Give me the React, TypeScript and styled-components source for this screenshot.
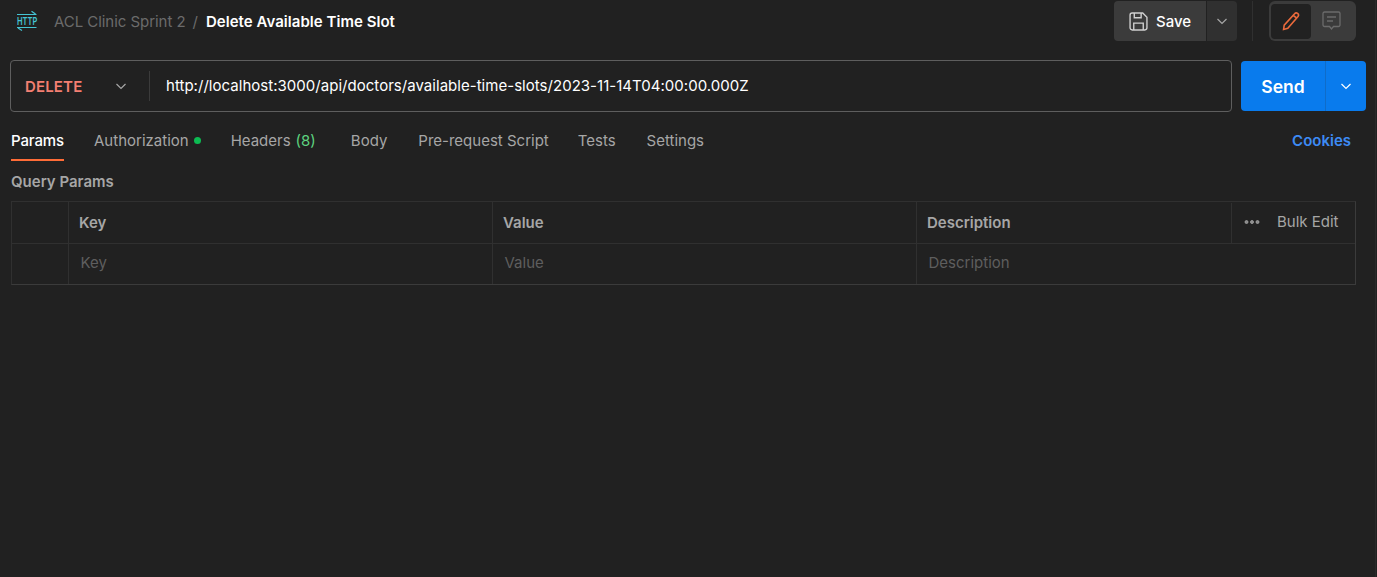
import React, { FC } from 'react';
import styled, { createGlobalStyle } from 'styled-components';

const GlobalStyle = createGlobalStyle`
    html, body {
        margin: 0;
        padding: 0;
        background: #212121;
        font-family: Inter, "Liberation Sans", sans-serif;
        overflow: hidden;
    }
    * { box-sizing: border-box; }
`;

const Page = styled.div`
    width: 1377px;
    height: 577px;
    background: #212121;
    box-shadow: inset -1px 0 0 #212121, inset -2px 0 0 #2a2a2a;
    color: #fff;
    overflow: hidden;
`;

const TopBar = styled.div`
    display: flex;
    align-items: flex-start;
    height: 60px;
    padding: 1px 21px 0 16px;
`;

const Crumbs = styled.div`
    display: flex;
    align-items: center;
    height: 40px;
    flex: 1;
    font-size: 15px;
`;

const Collection = styled.span`
    color: #6b6b6b;
    margin-left: 16px;
    letter-spacing: -0.05px;
`;

const Slash = styled.span`
    color: #6b6b6b;
    margin: 0 8px 0 7px;
`;

const RequestName = styled.span`
    color: #fff;
    font-weight: 600;
    letter-spacing: 0.04px;
`;

const SaveGroup = styled.div`
    display: flex;
    height: 40px;
    gap: 1px;
`;

const SaveButton = styled.div`
    display: flex;
    align-items: center;
    gap: 8px;
    width: 92px;
    padding-left: 15px;
    background: #3b3b3b;
    border-radius: 4px 0 0 4px;
    color: #fff;
    font-size: 15px;
    font-weight: 500;
`;

const SaveCaret = styled.div`
    display: flex;
    align-items: center;
    justify-content: center;
    width: 30px;
    background: #303030;
    border-radius: 0 4px 4px 0;
    color: #a6a6a6;
`;

const Divider = styled.div`
    width: 1px;
    height: 40px;
    margin: 0 16px 0 15px;
    background: #303030;
`;

const ModeToggle = styled.div`
    display: flex;
    align-items: center;
    width: 87px;
    height: 40px;
    padding: 3px 2px;
    background: #3b3b3b;
    border-radius: 6px;
`;

const ModeButton = styled.div<{ $active?: boolean }>`
    display: flex;
    align-items: center;
    justify-content: center;
    width: 40px;
    height: 35px;
    border-radius: 4px;
    background: ${p => (p.$active ? '#212121' : 'transparent')};
`;

const UrlRow = styled.div`
    display: flex;
    align-items: center;
    height: 52px;
    padding: 0 11px 0 10px;
    gap: 9px;
`;

const UrlBox = styled.div`
    display: flex;
    align-items: center;
    flex: 1;
    height: 52px;
    border: 1px solid #5e5e5e;
    border-radius: 4px;
`;

const Method = styled.div`
    display: flex;
    align-items: center;
    justify-content: space-between;
    width: 139px;
    height: 30px;
    padding: 0 14px;
    border-right: 1px solid #3b3b3b;
    color: #f47f72;
    font-size: 15px;
    font-weight: 600;
    letter-spacing: 0.15px;
`;

const MethodCaret = styled.span`
    display: flex;
    color: #a6a6a6;
    margin-right: 6px;
`;

const UrlText = styled.div`
    margin-left: 16px;
    margin-bottom: 1px;
    color: #fff;
    font-size: 15px;
    letter-spacing: 0.03px;
`;

const SendGroup = styled.div`
    display: flex;
    width: 125px;
    height: 50px;
    background: #097bed;
    border-radius: 4px;
`;

const SendLabel = styled.div`
    display: flex;
    align-items: center;
    justify-content: center;
    width: 85px;
    border-right: 1px solid #0f6cc9;
    color: #fff;
    font-size: 17.5px;
    font-weight: 600;
`;

const SendCaret = styled.div`
    display: flex;
    align-items: center;
    justify-content: center;
    flex: 1;
    color: #fff;
`;

const TabBar = styled.div`
    display: flex;
    align-items: flex-start;
    height: 49px;
    padding: 0 26px 0 11px;
`;

const Tab = styled.div<{ $active?: boolean; $gap: number }>`
    display: flex;
    align-items: center;
    height: 49px;
    padding-top: 10px;
    margin-right: ${p => p.$gap}px;
    border-bottom: 2px solid ${p => (p.$active ? '#ff6c37' : 'transparent')};
    color: ${p => (p.$active ? '#fff' : '#a6a6a6')};
    font-size: 15px;
    font-weight: ${p => (p.$active ? 500 : 400)};
    letter-spacing: ${p => (p.$active ? '-0.12px' : '0')};
`;

const StatusDot = styled.span`
    width: 7px;
    height: 7px;
    margin-left: 5px;
    border-radius: 50%;
    background: #0cbb52;
`;

const Count = styled.span`
    margin-left: 5px;
    color: #5dd17f;
`;

const Cookies = styled.div`
    display: flex;
    align-items: center;
    height: 49px;
    padding-top: 10px;
    padding-bottom: 2px;
    margin-left: auto;
    color: #3d8bf5;
    font-size: 15px;
    font-weight: 600;
`;

const SectionTitle = styled.div`
    height: 29px;
    padding: 12px 0 0 11px;
    color: #a6a6a6;
    font-size: 15px;
    font-weight: 600;
    line-height: 17px;
`;

const Table = styled.div`
    width: 1345px;
    margin: 11px 0 0 11px;
    border: 1px solid #303030;
    border-right-color: #3b3b3b;
    border-bottom-color: #3b3b3b;
`;

const Row = styled.div<{ $head?: boolean }>`
    display: grid;
    grid-template-columns: 56px 424px 424px 1fr;
    height: ${p => (p.$head ? 42 : 40)}px;
    border-bottom: ${p => (p.$head ? '1px solid #303030' : 'none')};
`;

const Cell = styled.div<{ $head?: boolean }>`
    display: flex;
    align-items: center;
    padding-left: ${p => (p.$head ? 10 : 11.5)}px;
    padding-bottom: ${p => (p.$head ? 0 : 4)}px;
    border-left: 1px solid #303030;
    color: ${p => (p.$head ? '#a6a6a6' : '#5e5e5e')};
    font-size: 15px;
    font-weight: ${p => (p.$head ? 600 : 400)};
    &:first-child { border-left: none; }
`;

const DescriptionHead = styled.div`
    display: flex;
    align-items: center;
    justify-content: space-between;
    padding-left: 10px;
    border-left: 1px solid #303030;
    color: #a6a6a6;
    font-size: 15px;
    font-weight: 600;
`;

const BulkEdit = styled.div`
    display: flex;
    align-items: center;
    width: 124px;
    height: 40px;
    padding: 0 0 2px 12px;
    border-left: 1px solid #303030;
    color: #a6a6a6;
    font-size: 15px;
    font-weight: 400;
`;

const BulkLabel = styled.span`
    margin-left: 17px;
`;

const HttpIcon: FC = () => (
    <svg width="22" height="22" viewBox="0 0 22 22" fill="none" stroke="#45c4d4" strokeWidth="1.2">
        <path d="M1 4.5H20.5M15.5 1.2L19.5 4" />
        <path d="M1 17.5H20.5M2 18L6 20.6" />
        <text transform="translate(1 15) scale(0.68 1)" fontSize="11" fontWeight="600" fill="#45c4d4" stroke="none" fontFamily="Inter, sans-serif">HTTP</text>
    </svg>
);

const Chevron: FC<{ size?: number }> = ({ size = 16 }) => (
    <svg width={size} height={size} viewBox="0 0 16 16" fill="none" stroke="currentColor" strokeWidth="1.2">
        <path d="M3.5 6L8 10.5L12.5 6" />
    </svg>
);

const SaveIcon: FC = () => (
    <svg width="19" height="19" viewBox="0 0 18 18" fill="none" stroke="#d0d0d0" strokeWidth="1.3">
        <path d="M1 3A2 2 0 0 1 3 1H13L17 5V15A2 2 0 0 1 15 17H3A2 2 0 0 1 1 15Z" />
        <path d="M5 1V5.5H11.5V1" />
        <path d="M4.5 17V10.5H13.5V17" />
    </svg>
);

const PencilIcon: FC = () => (
    <svg width="20" height="20" viewBox="0 0 20 20" fill="none" stroke="#ea6a3c" strokeWidth="1.6">
        <path d="M13.6 2.8A2.1 2.1 0 0 1 17 5.4L6.8 17.2L2.6 18.4L3.2 14.2Z" />
        <path d="M12.2 4.4L15.6 7" />
    </svg>
);

const CommentIcon: FC = () => (
    <svg width="19" height="20" viewBox="0 0 19 20" fill="none" stroke="#6b6b6b" strokeWidth="1.3">
        <path d="M1 2.5A1.5 1.5 0 0 1 2.5 1H16.5A1.5 1.5 0 0 1 18 2.5V14A1.5 1.5 0 0 1 16.5 15.5H11.5L9.5 18L7.5 15.5H2.5A1.5 1.5 0 0 1 1 14Z" />
        <path d="M5 6H14M5 10H11" />
    </svg>
);

const DotsIcon: FC = () => (
    <svg width="16" height="6" viewBox="0 0 16 6" fill="#8a8a8a" stroke="#a6a6a6" strokeWidth="0.8">
        <circle cx="2.5" cy="3" r="1.5" />
        <circle cx="8" cy="3" r="1.5" />
        <circle cx="13.5" cy="3" r="1.5" />
    </svg>
);

const App: FC = () => (
    <Page>
        <GlobalStyle />
        <TopBar>
            <Crumbs>
                <HttpIcon />
                <Collection>ACL Clinic Sprint 2</Collection>
                <Slash>/</Slash>
                <RequestName>Delete Available Time Slot</RequestName>
            </Crumbs>
            <SaveGroup>
                <SaveButton><SaveIcon />Save</SaveButton>
                <SaveCaret><Chevron /></SaveCaret>
            </SaveGroup>
            <Divider />
            <ModeToggle>
                <ModeButton $active><PencilIcon /></ModeButton>
                <ModeButton><CommentIcon /></ModeButton>
            </ModeToggle>
        </TopBar>

        <UrlRow>
            <UrlBox>
                <Method>
                    DELETE
                    <MethodCaret><Chevron /></MethodCaret>
                </Method>
                <UrlText>http://localhost:3000/api/doctors/available-time-slots/2023-11-14T04:00:00.000Z</UrlText>
            </UrlBox>
            <SendGroup>
                <SendLabel>Send</SendLabel>
                <SendCaret><Chevron /></SendCaret>
            </SendGroup>
        </UrlRow>

        <TabBar>
            <Tab $active $gap={30}>Params</Tab>
            <Tab $gap={30}>Authorization<StatusDot /></Tab>
            <Tab $gap={35}>Headers<Count>(8)</Count></Tab>
            <Tab $gap={31}>Body</Tab>
            <Tab $gap={29}>Pre-request Script</Tab>
            <Tab $gap={31}>Tests</Tab>
            <Tab $gap={30}>Settings</Tab>
            <Cookies>Cookies</Cookies>
        </TabBar>

        <SectionTitle>Query Params</SectionTitle>

        <Table>
            <Row $head>
                <Cell $head />
                <Cell $head>Key</Cell>
                <Cell $head>Value</Cell>
                <DescriptionHead>
                    Description
                    <BulkEdit><DotsIcon /><BulkLabel>Bulk Edit</BulkLabel></BulkEdit>
                </DescriptionHead>
            </Row>
            <Row>
                <Cell />
                <Cell>Key</Cell>
                <Cell>Value</Cell>
                <Cell>Description</Cell>
            </Row>
        </Table>
    </Page>
);

export default App;
